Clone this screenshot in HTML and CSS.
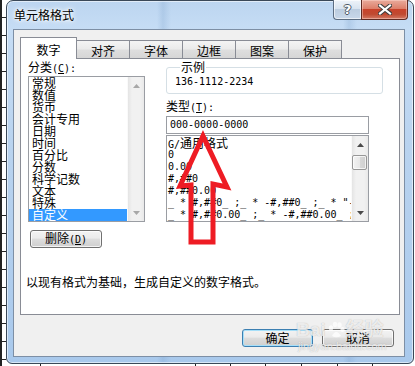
FILE: index.html
```html
<!DOCTYPE html>
<html lang="zh-CN">
<head>
<meta charset="utf-8">
<title>单元格格式</title>
<link rel="stylesheet" href="styles.css">
</head>
<body>
<div class="window">
  <div class="titlebar">
    <span class="title">单元格格式</span>
    <div class="caption">
      <span class="cap-btn help">?</span>
      <span class="cap-btn close">
        <svg width="14" height="11" viewBox="0 0 14 11">
          <path d="M2 1.5 L12 9.5 M12 1.5 L2 9.5" stroke="#3d3d3d" stroke-width="4.2" stroke-linecap="square"/>
          <path d="M2 1.5 L12 9.5 M12 1.5 L2 9.5" stroke="#ffffff" stroke-width="2.2" stroke-linecap="square"/>
        </svg>
      </span>
    </div>
  </div>
  <div class="client">
    <div class="tabs">
      <span class="tab active">数字</span>
      <span class="tab">对齐</span>
      <span class="tab">字体</span>
      <span class="tab">边框</span>
      <span class="tab">图案</span>
      <span class="tab">保护</span>
    </div>
    <div class="panel">
      <div class="panel-top">
        <div class="col-left">
          <div class="label">分类<span class="m">(<u>C</u>):</span></div>
          <div class="listbox cats">
            <div class="items">
              <div class="item">常规</div>
              <div class="item">数值</div>
              <div class="item">货币</div>
              <div class="item">会计专用</div>
              <div class="item">日期</div>
              <div class="item">时间</div>
              <div class="item">百分比</div>
              <div class="item">分数</div>
              <div class="item">科学记数</div>
              <div class="item">文本</div>
              <div class="item">特殊</div>
              <div class="item selected">自定义</div>
            </div>
            <div class="scrollbar disabled">
              <div class="sb-btn"><svg width="7" height="4" viewBox="0 0 7 4"><polygon points="0,4 3.5,0 7,4"/></svg></div>
              <div class="sb-track"></div>
              <div class="sb-btn"><svg width="7" height="4" viewBox="0 0 7 4"><polygon points="0,0 7,0 3.5,4"/></svg></div>
            </div>
          </div>
          <button class="btn delete">删除<span class="m">(<u>D</u>)</span></button>
        </div>
        <div class="col-right">
          <fieldset class="sample">
            <legend>示例</legend>
            <div class="m">136-1112-2234</div>
          </fieldset>
          <div class="label type-label">类型<span class="m">(<u>T</u>):</span></div>
          <div class="input m">000-0000-0000</div>
          <div class="listbox types">
            <div class="items">
              <div class="item"><span class="m">G/</span>通用格式</div>
              <div class="item m">0</div>
              <div class="item m">0.00</div>
              <div class="item m">#,##0</div>
              <div class="item m">#,##0.00</div>
              <div class="item m">_ * #,##0_ ;_ * -#,##0_ ;_ * "-"_ ;_ @_ </div>
              <div class="item m">_ * #,##0.00_ ;_ * -#,##0.00_ ;_ * "-"??_ ;_ @_ </div>
            </div>
            <div class="scrollbar">
              <div class="sb-btn"><svg width="7" height="4" viewBox="0 0 7 4"><polygon points="0,4 3.5,0 7,4"/></svg></div>
              <div class="sb-track"><div class="sb-thumb"></div></div>
              <div class="sb-btn"><svg width="7" height="4" viewBox="0 0 7 4"><polygon points="0,0 7,0 3.5,4"/></svg></div>
            </div>
          </div>
        </div>
      </div>
      <p class="desc">以现有格式为基础，生成自定义的数字格式。</p>
    </div>
    <div class="footer">
      <button class="btn default">确定</button>
      <button class="btn">取消</button>
    </div>
  </div>
</div>

<svg class="arrow" width="415" height="366" viewBox="0 0 415 366">
  <polygon points="203,136 227,187 213,184 213,242 191,242 191,185 180,186" fill="none" stroke="#ee1c24" stroke-width="5" stroke-linejoin="miter"/>
</svg>

<div class="watermark">
  <div class="wm-top">Bai<svg class="paw" width="18" height="18" viewBox="0 0 18 18"><ellipse cx="4" cy="7" rx="2.2" ry="2.8"/><ellipse cx="8" cy="3.5" rx="2.2" ry="2.8"/><ellipse cx="12.5" cy="4" rx="2.2" ry="2.8"/><ellipse cx="15.5" cy="8.5" rx="2" ry="2.5"/><path d="M5 15 Q9 7 14 15 Q9 17.5 5 15Z"/></svg>经验</div>
  <div class="wm-url">jingyan.baidu.com</div>
</div>
</body>
</html>
```

FILE: styles.css
```css
html, body {
  margin: 0;
  padding: 0;
}

body {
  width: 415px;
  height: 366px;
  overflow: hidden;
  position: relative;
  font-family: "Noto Sans CJK SC", sans-serif;
  font-size: 12px;
  line-height: 12px;
  color: #000;
  background-color: #fff;
  background-image:
    linear-gradient(#222, #222),
    repeating-linear-gradient(to bottom, transparent 0 17px, #222 17px 18px),
    linear-gradient(#222, #222),
    linear-gradient(#222, #222),
    linear-gradient(#222, #222),
    linear-gradient(#222, #222),
    linear-gradient(#222, #222),
    linear-gradient(#222, #222),
    linear-gradient(#222, #222);
  background-repeat: no-repeat;
  background-size:
    2px 100%,
    6px 100%,
    1px 100%,
    1px 100%,
    1px 100%,
    1px 100%,
    1px 100%,
    1px 100%,
    1px 100%;
  background-position:
    0 0,
    0 0,
    40px 0,
    195px 0,
    230px 0,
    265px 0,
    301px 0,
    337px 0,
    372px 0;
}

.m {
  font-family: "DejaVu Sans Mono", "Liberation Mono", monospace;
  font-size: 10px;
}

/* window frame */
.window {
  margin-left: 6px;
  width: 408px;
  height: 364px;
  box-sizing: border-box;
  border: 1px solid #3a4858;
  border-radius: 7px 7px 6px 6px;
  background:
    repeating-linear-gradient(to right, transparent 0 150px, rgba(110, 150, 195, 0.22) 156px, transparent 164px, transparent 186px),
    linear-gradient(to bottom, #bcd5f0 0%, #c6ddf5 8%, #b9d3ef 40%, #a9c9ec 100%);
  box-shadow: inset 0 0 0 1px rgba(255, 255, 255, 0.55);
  display: flex;
  flex-direction: column;
}

.titlebar {
  height: 28px;
  flex: none;
  display: flex;
  justify-content: space-between;
  align-items: flex-start;
  padding: 0 5px 0 7px;
  box-sizing: border-box;
}

.title {
  margin-top: 8px;
  color: #000;
  text-shadow: 0 0 4px #fff, 0 0 6px #fff, 0 0 2px #fff;
}

.caption {
  display: flex;
  margin-top: -1px;
}

.cap-btn {
  height: 20px;
  box-sizing: border-box;
  display: flex;
  align-items: center;
  justify-content: center;
}

.help {
  width: 28px;
  border: 1px solid #5c6d82;
  border-top: 0;
  border-right: 0;
  border-radius: 0 0 0 4px;
  background: linear-gradient(to bottom, #eef3f9 0%, #d9e4f0 45%, #bccde0 50%, #c9d8ea 100%);
  box-shadow: inset 0 0 0 1px rgba(255, 255, 255, 0.6);
  font-family: "DejaVu Sans", sans-serif;
  font-weight: bold;
  font-size: 13px;
  color: #fff;
  text-shadow: 1px 0 0 #4c5866, -1px 0 0 #4c5866, 0 1px 0 #4c5866, 0 -1px 0 #4c5866;
}

.close {
  width: 47px;
  border: 1px solid #5e2a22;
  border-top: 0;
  border-radius: 0 0 4px 0;
  background: linear-gradient(to bottom, #e9ab9c 0%, #dd806b 45%, #c8432b 50%, #c04a31 75%, #d47a64 100%);
  box-shadow: inset 0 0 0 1px rgba(255, 220, 210, 0.45);
}

/* client area */
.client {
  margin: 0 8px 6px 6px;
  height: 328px;
  flex: none;
  box-sizing: border-box;
  border: 1px solid #7d8fa5;
  background: #f0f0f0;
  padding: 7px 4px 0 6px;
  display: flex;
  flex-direction: column;
}

.tabs {
  display: flex;
  align-items: flex-end;
  height: 21px;
  flex: none;
}

.tab {
  width: 54px;
  height: 18px;
  box-sizing: border-box;
  margin-left: -1px;
  border: 1px solid #898c95;
  border-bottom: 0;
  padding-top: 4px;
  text-align: center;
  background: linear-gradient(to bottom, #f4f4f4 0%, #ebebeb 45%, #dedede 55%, #d6d6d6 100%);
}

.tab.active {
  width: 57px;
  height: 22px;
  margin-left: 0;
  margin-bottom: -1px;
  padding-top: 6px;
  background: #fff;
  position: relative;
  z-index: 1;
}

.tab.active + .tab {
  margin-left: -1px;
}

.panel {
  width: 380px;
  height: 257px;
  flex: none;
  box-sizing: border-box;
  border: 1px solid #898c95;
  background: #fff;
}

.panel-top {
  display: flex;
  padding-left: 7px;
}

.col-left {
  width: 117px;
  padding-top: 2px;
  display: flex;
  flex-direction: column;
  align-items: flex-start;
}

.label {
  height: 12px;
  white-space: nowrap;
}

.listbox {
  box-sizing: border-box;
  border: 1px solid #9a9da3;
  background: #fff;
  display: flex;
}

.cats {
  width: 117px;
  height: 146px;
  margin-top: 3px;
}

.items {
  flex: 1;
  min-width: 0;
  overflow: hidden;
}

.item {
  height: 12px;
  line-height: 12px;
  white-space: nowrap;
}

.cats .item {
  padding-left: 3px;
}

.item.selected {
  background: #3399ff;
  color: #fff;
}

.scrollbar {
  width: 17px;
  flex: none;
  display: flex;
  flex-direction: column;
  background: linear-gradient(to right, #e4e4e4 0%, #f1f1f1 25%, #f1f1f1 75%, #e9e9e9 100%);
  border-left: 1px solid #fafafa;
  box-sizing: border-box;
}

.sb-btn {
  height: 17px;
  flex: none;
  display: flex;
  align-items: center;
  justify-content: center;
}

.sb-btn svg {
  fill: #4a4a4a;
}

.scrollbar.disabled .sb-btn svg {
  fill: #a8a8a8;
}

.sb-track {
  flex: 1;
  padding: 2px 1px 0 0;
}

.sb-thumb {
  height: 15px;
  box-sizing: border-box;
  border: 1px solid #979797;
  border-radius: 2px;
  background: linear-gradient(to right, #f3f3f3 0%, #e8e8e8 50%, #d8d8d8 51%, #cfcfcf 100%);
  box-shadow: inset 0 0 0 1px rgba(255, 255, 255, 0.7);
}

.btn {
  font: inherit;
  color: #000;
  box-sizing: border-box;
  height: 18px;
  line-height: 14px;
  padding: 0;
  border: 1px solid #707070;
  border-radius: 3px;
  background: linear-gradient(to bottom, #f3f3f3 0%, #ebebeb 45%, #dddddd 50%, #cfcfcf 100%);
  box-shadow: inset 0 0 0 1px rgba(255, 255, 255, 0.75);
  text-align: center;
}

.delete {
  width: 72px;
  margin: 8px 0 0 2px;
}

.col-right {
  width: 217px;
  margin-left: 21px;
  display: flex;
  flex-direction: column;
  align-items: flex-start;
}

.sample {
  width: 217px;
  min-width: 0;
  box-sizing: border-box;
  margin: 2px 0 0;
  padding: 3px 0 5px 8px;
  border: 1px solid #d5dfe5;
  border-radius: 3px;
}

.sample legend {
  margin-left: 5px;
  padding: 0 1px;
  line-height: 12px;
  height: 12px;
}

.sample .m {
  height: 12px;
  line-height: 12px;
}

.type-label {
  margin-top: 6px;
}

.input {
  width: 203px;
  height: 18px;
  margin-top: 4px;
  box-sizing: border-box;
  border: 1px solid #9a9da3;
  background: #fff;
  padding-left: 3px;
  line-height: 16px;
}

.types {
  width: 203px;
  height: 87px;
  margin-top: 1px;
}

.types .items {
  padding: 1px 0 0 1px;
}

.desc {
  margin: 28px 0 0 5px;
  line-height: 12px;
}

.footer {
  display: flex;
  justify-content: flex-end;
  gap: 9px;
  margin-top: 14px;
  padding-right: 6px;
}

.footer .btn {
  width: 72px;
}

.footer .btn.default {
  width: 71px;
  border-color: #3c7fb1;
  box-shadow: inset 0 0 0 1px #a6dff9;
}

/* overlays */
.arrow {
  position: absolute;
  left: 0;
  top: 0;
  pointer-events: none;
}

.watermark {
  position: absolute;
  left: 296px;
  top: 320px;
  color: rgba(255, 255, 255, 0.75);
  text-shadow: 0 0 1px rgba(90, 90, 90, 0.45);
  pointer-events: none;
}

.wm-top {
  display: flex;
  align-items: center;
  font-family: "Liberation Sans", sans-serif;
  font-weight: bold;
  font-size: 19px;
  line-height: 20px;
}

.wm-top .paw {
  fill: rgba(255, 255, 255, 0.75);
  margin: 0 1px;
}

.wm-top {
  font-family: "Liberation Sans", "Noto Sans CJK SC", sans-serif;
}

.wm-url {
  font-family: "Liberation Sans", sans-serif;
  font-size: 11px;
  line-height: 11px;
  margin-top: 1px;
  margin-left: 2px;
}
```
